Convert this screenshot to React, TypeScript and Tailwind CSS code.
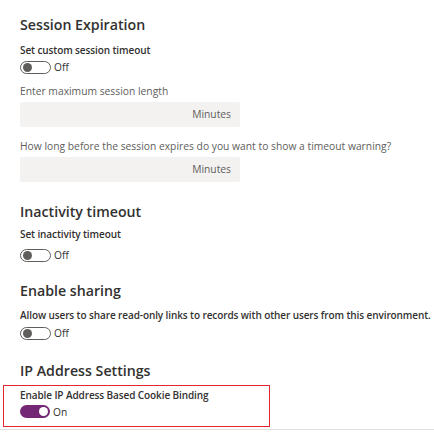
import React from "react";

function Toggle({ on }: { on: boolean }) {
  return (
    <div className="flex items-center h-[14px]">
      {on ? (
        <div className="w-[30px] h-[13px] rounded-full bg-[#742774] flex items-center justify-end pr-[2px]">
          <div className="w-[9px] h-[9px] rounded-full bg-white" />
        </div>
      ) : (
        <div className="w-[31px] h-[13px] rounded-full border border-[#605e5c] flex items-center pl-[2px]">
          <div className="w-[9px] h-[9px] rounded-full bg-[#605e5c]" />
        </div>
      )}
      <span className="ml-[3px] text-[10.2px] text-[#323130] leading-[14px]">{on ? "On" : "Off"}</span>
    </div>
  );
}

function Heading({ children, className = "" }: { children: React.ReactNode; className?: string }) {
  return (
    <h2 className={"text-[14.2px] font-semibold text-[#323130] leading-[20px] " + className}>{children}</h2>
  );
}

function Label({ children, className = "" }: { children: React.ReactNode; className?: string }) {
  return (
    <div
      className={
        "text-[10px] font-semibold tracking-[-0.1px] text-[#323130] leading-[14px] whitespace-nowrap " + className
      }
    >
      {children}
    </div>
  );
}

function Hint({ children, className = "" }: { children: React.ReactNode; className?: string }) {
  return (
    <div className={"text-[10.3px] text-[#605e5c] leading-[14px] whitespace-nowrap " + className}>{children}</div>
  );
}

function MinutesBox({ className = "" }: { className?: string }) {
  return (
    <div
      className={
        "w-[220px] h-[25px] bg-[#f3f2f1] rounded-[2px] flex items-center justify-end pr-[9px] text-[10.3px] text-[#605e5c] " +
        className
      }
    >
      Minutes
    </div>
  );
}

export default function App() {
  return (
    <div
      className="w-[434px] h-[440px] bg-white overflow-hidden relative"
      style={{ fontFamily: '"Segoe UI", "Open Sans", sans-serif' }}
    >
      <div className="pl-5 pt-[15px] flex flex-col">
        {/* Session expiration */}
        <Heading>Session Expiration</Heading>
        <Label className="mt-[8px]">Set custom session timeout</Label>
        <div className="mt-[3px]">
          <Toggle on={false} />
        </div>
        <Hint className="mt-[10px]">Enter maximum session length</Hint>
        <MinutesBox className="mt-[4px]" />
        <Hint className="mt-[12px]">How long before the session expires do you want to show a timeout warning?</Hint>
        <MinutesBox className="mt-[4px]" />

        {/* Inactivity */}
        <Heading className="mt-[20px]">Inactivity timeout</Heading>
        <Label className="mt-[5px]">Set inactivity timeout</Label>
        <div className="mt-[7px]">
          <Toggle on={false} />
        </div>

        {/* Sharing */}
        <Heading className="mt-[19px]">Enable sharing</Heading>
        <Label className="mt-[7px]">Allow users to share read-only links to records with other users from this environment.</Label>
        <div className="mt-[4px]">
          <Toggle on={false} />
        </div>

        {/* IP address */}
        <Heading className="mt-[21px]">IP Address Settings</Heading>
      </div>

      <div className="ml-[3px] mt-[4px] w-[267px] h-[42px] border-[1.5px] border-[#e3262f] pl-[16px] pt-[1.5px]">
        <Label>Enable IP Address Based Cookie Binding</Label>
        <div className="mt-[3px]">
          <Toggle on={true} />
        </div>
      </div>
      <div className="mt-[2px] h-px bg-[#e1dfdd]" />
    </div>
  );
}
